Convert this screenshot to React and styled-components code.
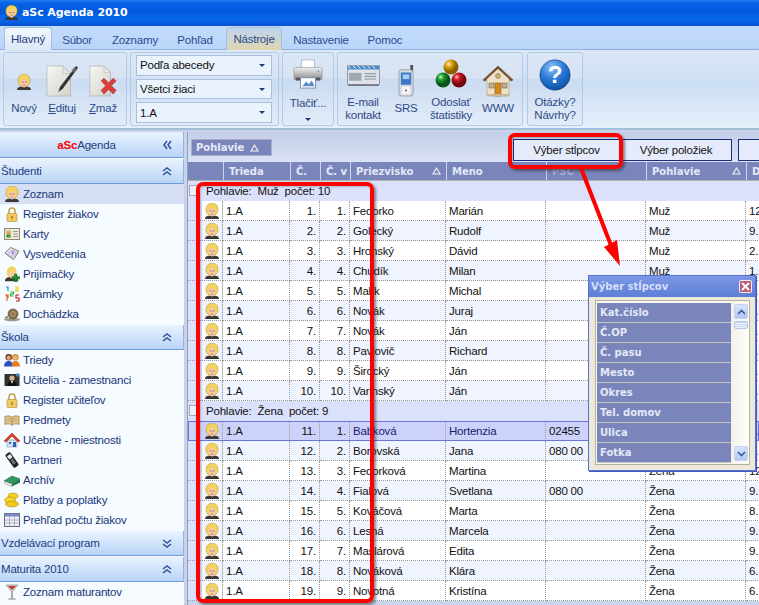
import React from 'react';
import styled, { createGlobalStyle } from 'styled-components';

const Global = createGlobalStyle`
  html, body { margin: 0; padding: 0; background: #dfe8f6; }
  * { box-sizing: border-box; }
  #root { width: 759px; height: 605px; overflow: hidden; }
`;
const UI = `"Liberation Sans", Arial, sans-serif`;
const BOLD = `"DejaVu Sans", Verdana, sans-serif`;

const Page = styled.div`
  position: relative; width: 759px; height: 605px; overflow: hidden;
  display: flex; flex-direction: column; font-family: ${UI}; font-size: 11.5px; letter-spacing: -.2px; color: #111;
`;
const TitleBar = styled.div`
  height: 26px; flex: none; display: flex; align-items: center; gap: 3px; padding: 0 0 1px 4px;
  background: linear-gradient(#1f7df0 0, #0a63e6 12%, #0058dd 45%, #0a68ee 75%, #0450d0 100%);
  color: #fff; font: bold 11px ${BOLD}; letter-spacing: -.1px;
`;
const TabRow = styled.div`
  height: 24px; flex: none; display: flex; align-items: flex-end; padding-left: 4px;
  background: linear-gradient(#c3dbfb, #bad5fa); border-bottom: 1px solid #8fb0dc;
`;
const Tab = styled.div`
  height: ${p => (p.$active || p.$tool ? 23 : 22)}px; width: ${p => p.$w}px; margin-left: ${p => p.$ml || 0}px; display: flex; align-items: center; justify-content: center;
  color: ${p => (p.$active ? '#1f3c7d' : '#2b4b8c')}; margin-bottom: -1px;
  border: ${p => (p.$active || p.$tool ? '1px solid #a5bfe0' : '1px solid transparent')}; border-bottom: none; border-radius: 4px 4px 0 0;
  background: ${p => (p.$active ? 'linear-gradient(#f3f8fe,#dce8f7)' : p.$tool ? 'linear-gradient(#bfd4ee,#e0d6ae)' : 'transparent')};
`;
const Ribbon = styled.div`
  height: 80px; flex: none; display: flex; gap: 3px; padding: 2px 0 0 3px;
  background: linear-gradient(#dbe7f7 0, #cddff4 45%, #e6effb 100%);
  border-bottom: 2px solid #9fc0d8;
`;
const Group = styled.div`
  width: ${p => p.$w}px; height: 74px; display: flex; flex: none; justify-content: ${p => p.$center ? 'center' : 'flex-start'};
  margin-left: ${p => p.$ml || 0}px;
  border: 1px solid #b4c9e5; border-radius: 3px; padding: ${p => p.$pad || '0'};
  background: linear-gradient(#dbe6f5 0, #d7e3f3 35%, #c9dbf0 36%, #e3ecf8 100%);
`;
const ComboStack = styled.div`
  display: flex; flex-direction: column; gap: 3px; padding: 2px 6px 2px 5px;
  width: 100%;
`;
const Combo = styled.div`
  height: 21px; display: flex; align-items: center; justify-content: space-between; padding: 0 6px 0 3px;
  background: #eaf2fc; border: 1px solid #a8c0de; color: #111;
`;
const Caret = styled.span`
  width: 0; height: 0; border-left: 3px solid transparent; border-right: 3px solid transparent;
  border-top: 3px solid #1d3a78; display: block; margin-top: ${p => p.$mt || 0}px;
`;
const RBtn = styled.div`
  width: ${p => p.$w}px; flex: none; display: flex; flex-direction: column; align-items: center;
`;
const IconSlot = styled.div`
  height: 38px; margin-top: 3px; width: 100%; display: flex; justify-content: center; align-items: flex-start;
  padding-top: ${p => p.$top}px;
`;
const RLabel = styled.div`
  height: 31px; margin-top: -1px; display: flex; flex-direction: column; align-items: center; justify-content: center;
  color: #2e4a8a; line-height: 13px; text-align: center; white-space: nowrap;
`;
const U = styled.span` text-decoration: underline; `;

const Body = styled.div` flex: 1; display: flex; min-height: 0; background: #c9d4ea; padding-top: 2px; `;
const Side = styled.div`
  width: 184px; flex: none; background: #f6fbff; display: flex; flex-direction: column;
  margin-right: 3px;
`;
const SideHead = styled.div`
  height: ${p => p.$first ? 26 : 25}px; flex: none; margin-top: ${p => p.$first ? 0 : 1}px; display: flex; align-items: center; justify-content: ${p => p.$center ? 'center' : 'space-between'};
  padding: 0 11px 0 1px; position: relative; color: #23407f;
  background: linear-gradient(#eaf3fe, #b9d4f7); border-bottom: 1px solid #6f9ddc; border-right: 1px solid #93b4e0;
`;
const Chev = styled.span`
  position: ${p => p.$abs ? 'absolute' : 'static'}; right: 11px; display: flex; color: #2f5597;
`;
const Brand = styled.span` color: #f00; font-weight: bold; `;
const SideItem = styled.div`
  height: 20px; flex: none; display: flex; align-items: center; gap: 3px; padding-left: 4px; color: #17357a;
  background: ${p => p.$active ? '#d7dff4' : 'transparent'};
`;

const Main = styled.div`
  flex: 1; min-width: 0; display: flex; flex-direction: column; overflow: hidden;
  border-left: 1px solid #8f9fc0;
`;
const GroupBar = styled.div`
  height: 30px; flex: none; display: flex; align-items: flex-start; padding-top: 7px; padding-left: 3px;
  background: linear-gradient(#c4cee8, #dbe2f6);
`;
const SortTag = styled.div`
  width: 81px; height: 17px; flex: none; display: flex; align-items: center; gap: 6px; padding-left: 4px; background: #7a86bb;
  border: 1px solid #a9afc8; color: #e6e9f8; font: bold 10px ${BOLD}; letter-spacing: 0;
`;
const Tri = styled.svg` flex: none; display: block; `;
const BarBtn = styled.div`
  width: ${p => p.$w}px; height: 22px; flex: none; display: flex; align-items: center; justify-content: center;
  margin-left: ${p => p.$ml}px; background: #e6ebfb; border: 1px solid #18307d; color: #111;
`;
const COLS = '35px 67px 30px 30px 96px 100px 100px 100px 100px';
const HeadRow = styled.div`
  height: 19px; flex: none; display: grid; grid-template-columns: ${COLS}; background: #7a86bb; border-bottom: 1px solid #b0b0b0;
`;
const HeadCell = styled.div`
  display: flex; align-items: center; justify-content: space-between; padding: 0 5px; overflow: hidden; white-space: nowrap;
  border-left: ${p => p.$first ? 'none' : '1px solid #cfd4ea'}; color: ${p => p.$dim ? '#a7afd3' : '#e4e8f8'}; font: bold 10px ${BOLD}; letter-spacing: 0;
`;
const GroupRow = styled.div`
  height: 20px; flex: none; display: flex; align-items: center; background: #dbe1fb; padding-left: 18px; color: #111; white-space: pre; position: relative;
`;
const Expander = styled.span`
  position: absolute; left: 1px; top: 4px; width: 11px; height: 11px; background: #eef1fb; border: 1px solid #a8a8a8;
`;
const Row = styled.div`
  height: 20px; flex: none; display: grid; grid-template-columns: ${COLS}; position: relative;
  background: ${p => p.$sel ? '#ccd2f9' : p.$alt ? '#f0f4fe' : '#fff'};
  outline: ${p => p.$sel ? '1px solid #6a74d6' : 'none'}; outline-offset: -1px; z-index: ${p => p.$sel ? 1 : 0};
`;
const Cell = styled.div`
  display: flex; align-items: center; justify-content: ${p => p.$right ? 'flex-end' : 'flex-start'}; padding: 0 3px; overflow: hidden; white-space: pre;
  border-right: 1px dotted #999; border-bottom: 1px dotted #999;
  color: ${p => p.$navy ? '#14206e' : '#111'};
`;
const IconCell = styled(Cell)`
  padding: 0 0 0 16px; background: ${p => p.$sel ? 'transparent' : 'linear-gradient(90deg,#dbe1fb 14px,transparent 14px)'};
`;

const Callout = styled.div`
  position: absolute; left: ${p => p.$x}px; top: ${p => p.$y}px; width: ${p => p.$w}px; height: ${p => p.$h}px; pointer-events: none; z-index: 3;
  border: 4px solid #f00; border-radius: 7px; box-shadow: 2px 2px 3px rgba(40,40,40,.55), inset 1px 1px 2px rgba(40,40,40,.25);
`;
const Arrow = styled.svg` position: absolute; left: 570px; top: 160px; z-index: 3; `;

const Popup = styled.div`
  position: absolute; left: 588px; top: 275px; width: 168px; height: 196px; z-index: 4; display: flex; flex-direction: column;
  background: #ece9d8; border: 1px solid #5a6fd0; box-shadow: 1px 1px 0 #4058c0;
`;
const PopTitle = styled.div`
  height: 21px; flex: none; display: flex; align-items: center; justify-content: space-between; padding: 0 3px 0 2px;
  background: linear-gradient(#7d98e6, #6888dc 60%, #5d7ed6); color: #d8dff7; font: bold 10px ${BOLD}; letter-spacing: 0;
`;
const PopClose = styled.span`
  width: 13px; height: 13px; display: flex; align-items: center; justify-content: center; background: #b95c78; border: 1px solid #eee; border-radius: 2px; flex: none;
`;
const PopBody = styled.div` flex: 1; padding: 3px 5px 7px 6px; display: flex; `;
const PopList = styled.div`
  flex: 1; display: flex; border: 1px solid #b5b29f; background: #f8f7f0; padding: 2px 0 1px 1px; overflow: hidden;
`;
const PopCols = styled.div` width: 134px; flex: none; display: flex; flex-direction: column; `;
const PopItem = styled.div`
  height: 20px; flex: none; display: flex; align-items: center; padding-left: 3px; background: #7a86bb; color: #e4e8f8;
  border-bottom: 1px solid #c8c8bc; font: bold 10px ${BOLD}; letter-spacing: 0;
`;
const Scroll = styled.div` flex: 1; display: flex; flex-direction: column; align-items: center; padding: 1px 1px 0 3px; background: linear-gradient(90deg,#f3f2ea,#fdfdfa); `;
const ScrollBtn = styled.div`
  width: 14px; height: 15px; flex: none; display: flex; align-items: center; justify-content: center; border-radius: 2px; background: linear-gradient(#d7e4fb,#b2c8f3); border: 1px solid #c3d3f3;
  margin-top: ${p => p.$end ? 'auto' : 0}; margin-bottom: ${p => p.$end ? '2px' : 0};
`;
const Thumb = styled.div`
  width: 14px; height: 8px; flex: none; margin-top: 2px; border-radius: 2px; background: repeating-linear-gradient(#c3d4f6 0 1px,#eef3fd 1px 2px); border: 1px solid #b3c8f0;
`;

const Person = ({ s = 16 }) => (
  <svg width={s} height={s} viewBox="0 0 16 16">
    <path d="M1 16c0-2.500 2-3.500 7-3.500S15 13.500 15 16z" fill="#3c3833" />
    <path d="M2 7c0-4.500 2.500-6.800 6-6.800s6.500 2.300 6 6.800c-.2 2.400-1.500 3.500-2 4.500L4.500 12C3 10.500 2 9 2 7z" fill="#f2d35c" stroke="#b08d30" strokeWidth=".5" />
    <path d="M4.500 6.500c1.700 0 3.500-1 4.500-2.200.7 1.400 1.500 2 2.800 2.200.1 3-1.200 7-3.700 7C6 13.500 4.500 10 4.500 6.500z" fill="#f6c9a8" />
    <path d="M6 8h1.500M9 8h1.500" stroke="#5a3a20" strokeWidth=".7" />
    <path d="M7.300 11h1.700" stroke="#c0384a" strokeWidth=".8" />
  </svg>
);
const Lock = () => (
  <svg width="16" height="16" viewBox="0 0 16 16"><path d="M5 8V5a3 3 0 016 0v3" fill="none" stroke="#c8a24a" strokeWidth="1.600" /><rect x="3" y="7.500" width="10" height="8" rx="1" fill="#f2c860" stroke="#b98a2c" strokeWidth=".6" /><rect x="7.300" y="10" width="1.400" height="3" fill="#a07020" /></svg>
);
const CardI = () => (
  <svg width="16" height="16" viewBox="0 0 16 16"><rect x=".5" y="2.500" width="15" height="11" fill="#efe9d6" stroke="#8a8a7a" /><rect x="2" y="4.500" width="5" height="7" fill="#d9c27a" /><circle cx="4.500" cy="6.500" r="1.500" fill="#d99a70" /><rect x="2.500" y="8.500" width="4" height="3" fill="#3a9a3a" /><path d="M9 5.500h5M9 8h5M9 10.500h5" stroke="#999" /></svg>
);
const Certs = () => (
  <svg width="16" height="16" viewBox="0 0 17 16"><path d="M1 7l6-6 9 4-6 9z" fill="#eee" stroke="#777" /><path d="M3 8l5-5 6 3-5 6z" fill="#d9d6f2" stroke="#888" strokeWidth=".5" /><path d="M8 5l3 1-2 3z" fill="#9a70d0" /></svg>
);
const PersonPlus = () => (
  <svg width="16" height="16" viewBox="0 0 16 16"><g transform="scale(.95)"><path d="M1 16c0-3 2-4.500 7-4.500S15 13 15 16z" fill="#3c3833" /><path d="M3 7c0-4 2-6.500 5-6.500s5.500 2 5 6.500l-2 4-6 .5C3.800 10.500 3 9 3 7z" fill="#f2d35c" /><path d="M5 6.500c1.500 0 3-1 4-2.200.7 1.400 1.500 2 2.400 2.200.1 3-1 6.500-3.300 6.500C6.200 13 5 10 5 6.500z" fill="#f6c9a8" /></g><path d="M10.500 8h2.500v2.500h2.700v2.500H13v2.700h-2.500V13H8v-2.500h2.500z" fill="#1f8a2c" stroke="#0e5a1a" strokeWidth=".4" /></svg>
);
const Grades = () => (
  <svg width="16" height="16" viewBox="0 0 16 16"><path d="M2 1h2v4" fill="none" strokeWidth="1.200" stroke="#19a" /><path d="M11 1h3v2h-2v2h3" fill="none" stroke="#eec800" strokeWidth="1.200" /><path d="M1 9h3v3M3 9v6" fill="none" stroke="#e86020" strokeWidth="1.200" /><path d="M12 9h3M12 9v3h3v3h-3" fill="none" stroke="#d01818" strokeWidth="1.200" /><path d="M6.500 6h3v2h-3v2h3" fill="none" stroke="#20b030" strokeWidth="1.200" /></svg>
);
const Snail = () => (
  <svg width="16" height="16" viewBox="0 0 16 16"><ellipse cx="8" cy="13.500" rx="8" ry="1.800" fill="#9c9a88" /><circle cx="9" cy="8" r="5" fill="#8a6e4a" stroke="#55422c" strokeWidth=".6" /><circle cx="9" cy="8" r="2.400" fill="none" stroke="#d0b890" strokeWidth=".7" /><path d="M1 12c1-1 2-1.500 3-1" stroke="#777" strokeWidth="1.200" /></svg>
);
const Grp = () => (
  <svg width="16" height="16" viewBox="0 0 17 16"><circle cx="5" cy="5" r="3.500" fill="#5a3a28" /><circle cx="5" cy="5.500" r="2.400" fill="#e4a070" /><path d="M0 15c0-4 2-6 5-6s5 2 5 6z" fill="#2a50c0" /><circle cx="12" cy="5" r="3.500" fill="#d89028" /><circle cx="12" cy="5.500" r="2.400" fill="#f0b080" /><path d="M8 15c0-4 1.500-6 4-6s5 2 5 6z" fill="#e88020" /></svg>
);
const Teacher = () => (
  <svg width="16" height="16" viewBox="0 0 16 16"><rect x=".5" y="2" width="15" height="12" fill="#333" /><circle cx="8" cy="6" r="2.600" fill="#e4b48c" /><path d="M3 14c0-3 2-5 5-5s5 2 5 5z" fill="#111" /><path d="M7 9l1 3 1-3z" fill="#fff" /><circle cx="13.500" cy="3" r="1.800" fill="#3a8ac0" /></svg>
);
const BookI = () => (
  <svg width="16" height="16" viewBox="0 0 18 16"><path d="M1 4c3-1 6-1 8 1 2-2 5-2 8-1v9c-3-1-6-1-8 1-2-2-5-2-8-1z" fill="#e0c68c" stroke="#8a6c38" strokeWidth=".7" /><path d="M9 5v9" stroke="#8a6c38" strokeWidth=".7" /><path d="M3 6.500c2-.5 3-.3 4.500 .3M3 9c2-.5 3-.3 4.500 .3M10.500 7c1.500-.6 2.500-.8 4.500-.5M10.500 9.500c1.500-.6 2.500-.8 4.500-.5" stroke="#a08850" strokeWidth=".6" fill="none" /></svg>
);
const HouseS = () => (
  <svg width="16" height="16" viewBox="0 0 16 16"><path d="M3 8h10v7H3z" fill="#dce6f5" stroke="#6680a8" strokeWidth=".5" /><path d="M0 9l8-8 8 8-2 1-6-6-6 6z" fill="#e03a20" stroke="#9a2010" strokeWidth=".5" /><rect x="9" y="10" width="3" height="5" fill="#2a60b0" /><circle cx="6" cy="11" r="1.300" fill="#3a70c0" /></svg>
);
const PhoneS = () => (
  <svg width="16" height="16" viewBox="0 0 16 16"><g transform="rotate(-35 8 8)"><rect x="5" y="0" width="6" height="16" rx="1.500" fill="#222" /><rect x="6" y="2" width="4" height="4" fill="#eee" /><path d="M6.500 8h3M6.500 10h3M6.500 12h3" stroke="#aaa" /></g></svg>
);
const GreenBook = () => (
  <svg width="16" height="16" viewBox="0 0 16 16"><path d="M0 9l8-5 8 3-8 5z" fill="#2f9a62" stroke="#1a5a3a" strokeWidth=".5" /><path d="M0 9v2l8 3.500V12z" fill="#f2f2e6" stroke="#777" strokeWidth=".5" /><path d="M8 12v2.500l8-4V7z" fill="#1f7a4c" /></svg>
);
const Coins = () => (
  <svg width="16" height="16" viewBox="0 0 16 16"><ellipse cx="9" cy="4" rx="5" ry="2.800" fill="#f4d020" stroke="#a88810" strokeWidth=".6" /><ellipse cx="6" cy="8" rx="5.500" ry="3" fill="#f6d82a" stroke="#a88810" strokeWidth=".6" /><ellipse cx="8" cy="12" rx="6.500" ry="3" fill="#f0c818" stroke="#a88810" strokeWidth=".6" /></svg>
);
const TableI = () => (
  <svg width="16" height="16" viewBox="0 0 16 16"><rect x=".5" y="1.500" width="15" height="13" fill="#eef0f8" stroke="#667" /><rect x=".5" y="1.500" width="15" height="3" fill="#7a88c0" /><path d="M5.500 4.500v10M10.500 4.500v10M.5 8h15M.5 11h15" stroke="#99a" strokeWidth=".7" /></svg>
);
const Glass = () => (
  <svg width="16" height="16" viewBox="0 0 16 16"><path d="M2 1h12L8 8z" fill="#d8d8d0" stroke="#777" strokeWidth=".6" /><path d="M4 2h8L8 6z" fill="#c03a30" /><path d="M8 8v6M4.500 15h7" stroke="#777" strokeWidth="1.200" /></svg>
);
const DocPen = () => (
  <svg width="32" height="32" viewBox="0 0 34 34"><defs><linearGradient id="dg" x1="0" y1="0" x2="1" y2="1"><stop offset="0" stopColor="#f8f8f4" /><stop offset="1" stopColor="#d2d2ca" /></linearGradient></defs><path d="M1 1h17l8 8v24H1z" fill="url(#dg)" stroke="#aaa" strokeWidth=".7" /><path d="M18 1v8h8z" fill="#e8e8e0" stroke="#aaa" strokeWidth=".5" /><path d="M32 1l2 2-16 22-5 4 2-6z" fill="#333" /><path d="M30 2l2 2-3 4-2-2z" fill="#777" /></svg>
);
const DocX = () => (
  <svg width="28" height="32" viewBox="0 0 30 34"><defs><linearGradient id="dx" x1="0" y1="0" x2="1" y2="1"><stop offset="0" stopColor="#f8f8f4" /><stop offset="1" stopColor="#d2d2ca" /></linearGradient></defs><path d="M1 1h15l7 7v25H1z" fill="url(#dx)" stroke="#aaa" strokeWidth=".7" /><path d="M16 1v7h7z" fill="#e8e8e0" stroke="#aaa" strokeWidth=".5" /><path d="M13 17l3-3 5 5 5-5 3 3-5 5 5 5-3 4-5-5-5 5-3-4 5-5z" fill="#d9403c" stroke="#a92a2a" strokeWidth=".6" /></svg>
);
const Printer = () => (
  <svg width="30" height="30" viewBox="0 0 32 32"><defs><linearGradient id="pg" x1="0" y1="0" x2="0" y2="1"><stop offset="0" stopColor="#f0f0f0" /><stop offset="1" stopColor="#8c8c8c" /></linearGradient></defs><path d="M9 1h14v9H9z" fill="#fff" stroke="#999" strokeWidth=".6" /><rect x="1" y="9" width="30" height="13" rx="2" fill="url(#pg)" stroke="#777" strokeWidth=".5" /><rect x="3" y="20" width="26" height="3" fill="#555" /><path d="M8 20h16v11H8z" fill="#fff" stroke="#7890b0" /><path d="M10 29l4-5 3 3 3-4 3 6z" fill="#5a8ac8" /><circle cx="27" cy="13" r="1" fill="#6ab" /></svg>
);
const Mail = () => (
  <svg width="33" height="21" viewBox="0 0 34 24" preserveAspectRatio="none"><rect x=".5" y=".5" width="33" height="22" fill="#dfe3e8" stroke="#667" strokeWidth=".6" /><path d="M1 1h32v4H1z" fill="#4a8ac8" /><path d="M1 1l3 3M6 1l3 3M11 1l3 3M16 1l3 3M21 1l3 3M26 1l3 3" stroke="#fff" /><rect x="2" y="9" width="13" height="9" fill="#a0a8b0" /><path d="M18 10h12M18 13h12M18 16h12" stroke="#7a8490" /><rect x="1" y="22" width="32" height="2" fill="#778" /></svg>
);
const Mobile = () => (
  <svg width="17" height="32" viewBox="0 0 18 34"><rect x="13" y="0" width="3" height="8" fill="#555" /><rect x="1" y="5" width="15" height="28" rx="3" fill="#d4dadf" stroke="#778" strokeWidth=".6" /><rect x="3" y="8" width="11" height="13" fill="#3a78c8" /><rect x="5" y="10" width="7" height="5" fill="#a8cdf0" /><rect x="4" y="23" width="9" height="8" rx="1" fill="#f4f4f4" /><circle cx="8.500" cy="27" r="1" fill="#555" /></svg>
);
const Balls = () => (
  <svg width="32" height="30" viewBox="0 0 32 30"><defs>
    <radialGradient id="b1" cx=".35" cy=".3"><stop offset="0" stopColor="#fff2b0" /><stop offset=".4" stopColor="#e0a818" /><stop offset="1" stopColor="#8a6000" /></radialGradient>
    <radialGradient id="b2" cx=".35" cy=".3"><stop offset="0" stopColor="#c8f0c8" /><stop offset=".4" stopColor="#20a030" /><stop offset="1" stopColor="#0a5018" /></radialGradient>
    <radialGradient id="b3" cx=".35" cy=".3"><stop offset="0" stopColor="#f8c0c0" /><stop offset=".4" stopColor="#d81828" /><stop offset="1" stopColor="#700810" /></radialGradient>
  </defs><circle cx="16" cy="8" r="7.500" fill="url(#b1)" /><circle cx="8" cy="21" r="7.500" fill="url(#b2)" /><circle cx="24" cy="21" r="7.500" fill="url(#b3)" /></svg>
);
const House = () => (
  <svg width="30" height="32" viewBox="0 0 30 32"><path d="M4 13h22v18H4z" fill="#f0e2c4" stroke="#a08858" strokeWidth=".5" /><path d="M0 15L15 1l15 14-2 1L15 4 2 16z" fill="#7a5430" stroke="#4a3018" strokeWidth=".5" /><path d="M15 4l11 10v1H4v-1z" fill="#ece0c6" /><circle cx="15" cy="11" r="2.500" fill="#c8b080" stroke="#806840" strokeWidth=".5" /><rect x="12" y="18" width="6" height="13" fill="#d48820" stroke="#7a4c10" strokeWidth=".5" /><rect x="6" y="18" width="5" height="5" fill="#b8b0a0" stroke="#705030" strokeWidth=".5" /><rect x="19" y="18" width="5" height="5" fill="#b8b0a0" stroke="#705030" strokeWidth=".5" /><rect x="4" y="29" width="22" height="2" fill="#c8b898" /></svg>
);
const Help = () => (
  <svg width="32" height="32" viewBox="0 0 32 32"><defs><radialGradient id="hq" cx=".4" cy=".25" r=".8"><stop offset="0" stopColor="#8cc4f8" /><stop offset=".5" stopColor="#2a7ad8" /><stop offset="1" stopColor="#0c4ca0" /></radialGradient></defs><circle cx="16" cy="16" r="15.200" fill="url(#hq)" stroke="#1a3f78" strokeWidth=".6" /><text x="16" y="24" textAnchor="middle" fontFamily="Liberation Sans, sans-serif" fontWeight="bold" fontSize="24" fill="#fff">?</text></svg>
);
const Chevrons = ({ dir }) => {
  const p = {
    up: 'M1 5l4-3 4 3M1 9l4-3 4 3',
    down: 'M1 2l4 3 4-3M1 6l4 3 4-3',
    left: 'M5 1L2 5l3 4M9 1L6 5l3 4',
  }[dir];
  return <svg width="10" height="10" viewBox="0 0 10 10"><path d={p} fill="none" stroke="#2f5597" strokeWidth="1.500" /></svg>;
};
const SortTri = () => (
  <Tri width="9" height="8" viewBox="0 0 9 8"><path d="M4.500 1L8 7H1z" fill="none" stroke="#f0f0f0" strokeWidth="1.100" /></Tri>
);

const students = [['Zoznam', <Person />, true], ['Register žiakov', <Lock />], ['Karty', <CardI />], ['Vysvedčenia', <Certs />], ['Prijímačky', <PersonPlus />], ['Známky', <Grades />], ['Dochádzka', <Snail />]];
const school = [['Triedy', <Grp />], ['Učitelia - zamestnanci', <Teacher />], ['Register učiteľov', <Lock />], ['Predmety', <BookI />], ['Učebne - miestnosti', <HouseS />], ['Partneri', <PhoneS />], ['Archív', <GreenBook />], ['Platby a poplatky', <Coins />], ['Prehľad počtu žiakov', <TableI />]];
const men = [['Fedorko', 'Marián', '', '12. 3. 1994'], ['Golecký', 'Rudolf', '', '9. 5. 1994'], ['Hronský', 'Dávid', '', '2. 11. 1994'], ['Chudík', 'Milan', '', '1. 2. 1994'], ['Malík', 'Michal', '', '3. 4. 1994'], ['Novák', 'Juraj', '', '6. 6. 1994'], ['Novák', 'Ján', '', '7. 7. 1994'], ['Pavlovič', 'Richard', '', '8. 8. 1994'], ['Širocký', 'Ján', '', '9. 9. 1994'], ['Varinský', 'Ján', '', '5. 10. 1994']];
const women = [['Babková', 'Hortenzia', '02455', '3. 1. 1994'], ['Borovská', 'Jana', '080 00', '5. 2. 1994'], ['Fedorková', 'Martina', '', '12. 3. 1994'], ['Fialová', 'Svetlana', '080 00', '9. 4. 1994'], ['Kováčová', 'Marta', '', '8. 5. 1994'], ['Lesná', 'Marcela', '', '9. 6. 1994'], ['Maslárová', 'Edita', '', '9. 7. 1994'], ['Nováková', 'Klára', '', '6. 8. 1994'], ['Novotná', 'Kristína', '', '6. 9. 1994']];
const columns = ['Kat.číslo', 'Č.OP', 'Č. pasu', 'Mesto', 'Okres', 'Tel. domov', 'Ulica', 'Fotka'];

const StudentRow = ({ n, v, d, sex, sel }) => (
  <Row $alt={n % 2 === 0} $sel={sel}>
    <IconCell $sel={sel}><Person s={16} /></IconCell>
    <Cell>1.A</Cell>
    <Cell $right>{n}.</Cell>
    <Cell $right>{v}.</Cell>
    <Cell $navy={sel}>{d[0]}</Cell>
    <Cell $navy={sel}>{d[1]}</Cell>
    <Cell>{d[2]}</Cell>
    <Cell>{sex}</Cell>
    <Cell>{d[3]}</Cell>
  </Row>
);

export default function App() {
  return (
    <Page>
      <Global />
      <TitleBar><Person s={15} /><span>aSc Agenda 2010</span></TitleBar>
      <TabRow>
        <Tab $active $w={48}>Hlavný</Tab>
        <Tab $w={50}>Súbor</Tab>
        <Tab $w={66}>Zoznamy</Tab>
        <Tab $w={54}>Pohľad</Tab>
        <Tab $tool $ml={4} $w={56}>Nástroje</Tab>
        <Tab $w={78}>Nastavenie</Tab>
        <Tab $w={50}>Pomoc</Tab>
      </TabRow>
      <Ribbon>
        <Group $w={124}>
          <RBtn $w={40}><IconSlot $top={18}><Person s={16} /></IconSlot><RLabel>Nový</RLabel></RBtn>
          <RBtn $w={36}><IconSlot $top={9}><DocPen /></IconSlot><RLabel><span><U>E</U>dituj</span></RLabel></RBtn>
          <RBtn $w={46}><IconSlot $top={9}><DocX /></IconSlot><RLabel><span><U>Z</U>maž</span></RLabel></RBtn>
        </Group>
        <Group $w={149}>
          <ComboStack>
            <Combo>Podľa abecedy<Caret /></Combo>
            <Combo>Všetci žiaci<Caret /></Combo>
            <Combo>1.A<Caret /></Combo>
          </ComboStack>
        </Group>
        <Group $w={52}>
          <RBtn $w={50}><IconSlot $top={3}><Printer /></IconSlot>
            <RLabel>Tlačiť...<Caret $mt={8} /></RLabel></RBtn>
        </Group>
        <Group $w={186} $pad="0 0 0 4px">
          <RBtn $w={42}><IconSlot $top={9}><Mail /></IconSlot><RLabel>E-mail<span>kontakt</span></RLabel></RBtn>
          <RBtn $w={44}><IconSlot $top={9}><Mobile /></IconSlot><RLabel>SRS</RLabel></RBtn>
          <RBtn $w={46}><IconSlot $top={3}><Balls /></IconSlot><RLabel>Odoslať<span>štatistiky</span></RLabel></RBtn>
          <RBtn $w={48}><IconSlot $top={9}><House /></IconSlot><RLabel>WWW</RLabel></RBtn>
        </Group>
        <Group $w={56} $ml={1} $center>
          <RBtn $w={54}><IconSlot $top={3}><Help /></IconSlot><RLabel>Otázky?<span>Návrhy?</span></RLabel></RBtn>
        </Group>
      </Ribbon>
      <Body>
        <Side>
          <SideHead $first $center>
            <span><Brand>aSc</Brand>Agenda</span>
            <Chev $abs><Chevrons dir="left" /></Chev>
          </SideHead>
          <SideHead>Študenti<Chev><Chevrons dir="up" /></Chev></SideHead>
          {students.map(([t, i, a]) => <SideItem key={t} $active={a}>{i}{t}</SideItem>)}
          <SideHead>Škola<Chev><Chevrons dir="up" /></Chev></SideHead>
          {school.map(([t, i]) => <SideItem key={t}>{i}{t}</SideItem>)}
          <SideHead>Vzdelávací program<Chev><Chevrons dir="down" /></Chev></SideHead>
          <SideHead>Maturita 2010<Chev><Chevrons dir="up" /></Chev></SideHead>
          <SideItem><Glass />Zoznam maturantov</SideItem>
        </Side>
        <Main>
          <GroupBar>
            <SortTag>Pohlavie <SortTri /></SortTag>
            <BarBtn $ml={241} $w={107}>Výber stĺpcov</BarBtn>
            <BarBtn $ml={0} $w={112}>Výber položiek</BarBtn>
            <BarBtn $ml={6} $w={60} />
          </GroupBar>
          <HeadRow>
            <HeadCell $first />
            <HeadCell>Trieda</HeadCell>
            <HeadCell>Č.</HeadCell>
            <HeadCell>Č. v</HeadCell>
            <HeadCell>Priezvisko<SortTri /></HeadCell>
            <HeadCell>Meno</HeadCell>
            <HeadCell $dim>PSČ</HeadCell>
            <HeadCell>Pohlavie<SortTri /></HeadCell>
            <HeadCell>D</HeadCell>
          </HeadRow>
          <GroupRow><Expander />{'Pohlavie:  Muž  počet: 10'}</GroupRow>
          {men.map((d, i) => <StudentRow key={i} n={i + 1} v={i + 1} d={d} sex="Muž" />)}
          <GroupRow><Expander />{'Pohlavie:  Žena  počet: 9'}</GroupRow>
          {women.map((d, i) => <StudentRow key={i} n={i + 11} v={i + 1} d={d} sex="Žena" sel={i === 0} />)}
        </Main>
      </Body>
      <Callout $x={196} $y={182} $w={178} $h={421} />
      <Callout $x={508} $y={133} $w={115} $h={36} />
      <Arrow width="60" height="110" viewBox="0 0 60 110">
        <path d="M11 8L42 88" stroke="#f00" strokeWidth="4" />
        <path d="M50 106L34 87 47 80z" fill="#f00" />
      </Arrow>
      <Popup>
        <PopTitle>Výber stĺpcov
          <PopClose><svg width="9" height="9" viewBox="0 0 9 9"><path d="M1 1l7 7M8 1L1 8" stroke="#fff" strokeWidth="2" /></svg></PopClose>
        </PopTitle>
        <PopBody>
          <PopList>
            <PopCols>{columns.map(c => <PopItem key={c}>{c}</PopItem>)}</PopCols>
            <Scroll>
              <ScrollBtn><svg width="9" height="6" viewBox="0 0 9 6"><path d="M1 5l3.500-3.500L8 5" fill="none" stroke="#3a5a98" strokeWidth="1.600" /></svg></ScrollBtn>
              <Thumb />
              <ScrollBtn $end><svg width="9" height="6" viewBox="0 0 9 6"><path d="M1 1l3.500 3.500L8 1" fill="none" stroke="#3a5a98" strokeWidth="1.600" /></svg></ScrollBtn>
            </Scroll>
          </PopList>
        </PopBody>
      </Popup>
    </Page>
  );
}
